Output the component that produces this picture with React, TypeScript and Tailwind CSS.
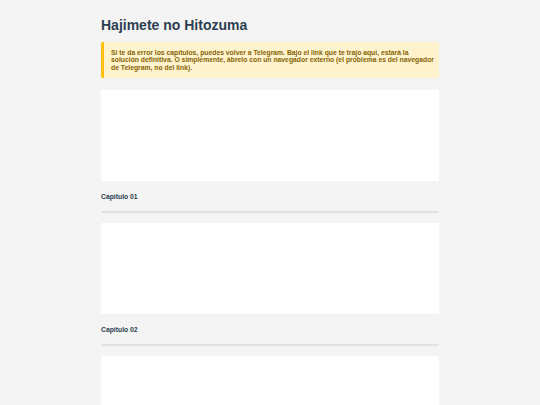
const chapters = ['Capítulo 01', 'Capítulo 02', 'Capítulo 03'];

function ChapterCard({ title }: { title: string }) {
    return (
        <div className="mb-[10px]">
            <div className="h-[91px] bg-white" />
            <div className="pt-[12px] pb-[10px] border-b-2 border-[#e2e2e2]">
                <h3 className="text-[6.8px] leading-[8px] font-bold text-[#2c3e50]">{title}</h3>
            </div>
        </div>
    );
}

export default function App() {
    return (
        <div
            className="min-h-screen bg-[#f4f4f4] overflow-hidden"
            style={{ fontFamily: '"Liberation Sans", Arial, sans-serif' }}
        >
            <div className="w-[338px] mx-auto pt-[16px]">
                <h1 className="text-[14px] leading-[18px] font-bold text-[#2c3e50] mb-[8px]">
                    Hajimete no Hitozuma
                </h1>

                <div className="bg-[#fff3cd] border-l-[3px] border-[#ffc107] rounded-[2px] pl-[7px] pr-[4px] py-[7px] mb-[12px]">
                    <p className="text-[6.8px] leading-[7.4px] font-bold text-[#856404]">
                        Si te da error los capítulos, puedes volver a Telegram. Bajo el link que te trajo aquí,
                        estará la solución definitiva. O simplemente, ábrelo con un navegador externo (el
                        problema es del navegador de Telegram, no del link).
                    </p>
                </div>

                {chapters.map((c) => (
                    <ChapterCard key={c} title={c} />
                ))}
            </div>
        </div>
    );
}
